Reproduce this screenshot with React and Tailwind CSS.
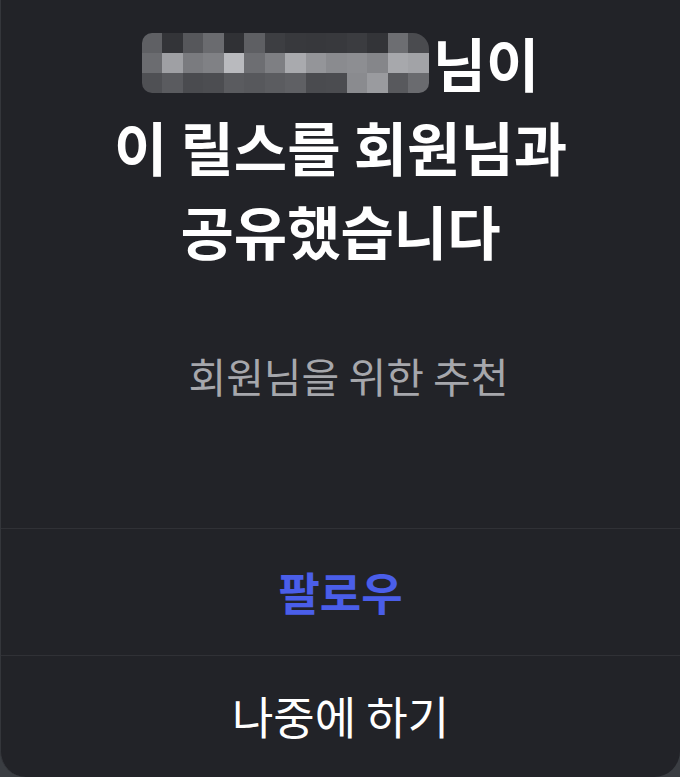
const mosaic = [
  ['#5f6064', '#333438', '#56575b', '#6a6b6f', '#303135', '#5e5f63', '#3d3e42', '#38393d', '#37383c', '#38393d', '#3b3c40', '#333438', '#6d6e72', '#4a4b4f'],
  ['#6b6c70', '#9fa0a4', '#7a7b7f', '#808185', '#b9babe', '#6d6e72', '#7e7f83', '#a9aaae', '#949599', '#8a8b8f', '#8d8e92', '#85868a', '#a7a8ac', '#a2a3a7'],
  ['#4f5054', '#5a5b5f', '#4a4b4f', '#4c4d51', '#5a5b5f', '#57585c', '#5b5c60', '#5f6064', '#4a4b4f', '#4b4c50', '#8a8b8f', '#9a9b9f', '#58595d', '#6a6b6f'],
];

function Mosaic() {
  return (
    <span className="inline-grid grid-cols-[repeat(14,20.5px)] grid-rows-[repeat(3,20px)] rounded-[10px] rounded-tr-[16px] overflow-hidden align-middle mr-[4px] -translate-y-[8px]">
      {mosaic.flat().map((c, i) => (
        <span key={i} style={{ backgroundColor: c }} />
      ))}
    </span>
  );
}

export default function App() {
  return (
    <div className="w-[680px] h-[777px] bg-[#3a3d42] font-['Noto_Sans_CJK_KR','Noto_Sans',sans-serif]">
      <div className="h-full flex flex-col bg-[#222328] rounded-b-[26px] border-l border-[#34363b]">
        <div className="h-[529px] flex flex-col items-center pt-[20px] border-b border-[#303136]">
          <h1 className="text-[58px] leading-[84px] font-bold text-white text-center">
            <span className="whitespace-nowrap">
              <Mosaic />님이
            </span>
            <br />
            이 릴스를 회원님과
            <br />
            공유했습니다
          </h1>
          <p className="mt-[79px] pl-[16px] text-[41px] leading-[48px] text-[#a6a7ac]">회원님을 위한 추천</p>
        </div>
        <button className="h-[127px] flex items-center justify-center border-b border-[#303136] text-[45px] font-bold text-[#4a5ee9]">
          팔로우
        </button>
        <button className="flex-1 flex items-center justify-center pb-[2px] text-[45px] text-white">
          나중에 하기
        </button>
      </div>
    </div>
  );
}
